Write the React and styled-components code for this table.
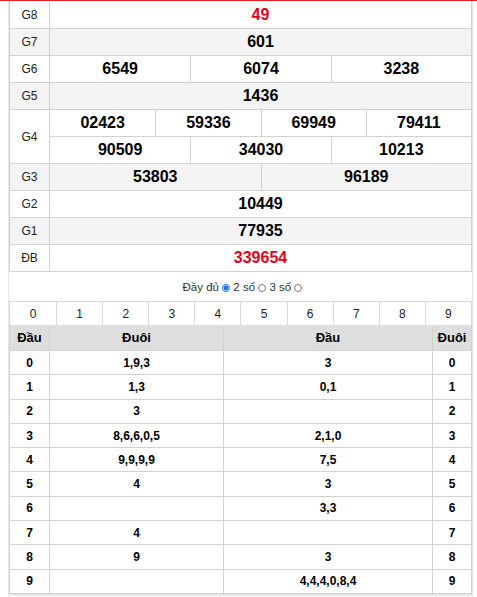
import React from "react";
import styled, { createGlobalStyle } from "styled-components";

const Global = createGlobalStyle`
  html, body { margin: 0; padding: 0; background: #fff; }
  body { font-family: Arial, "Liberation Sans", Helvetica, sans-serif; color: #000; }
  * { box-sizing: border-box; }
`;

const TopBar = styled.div`
  height: 1px;
  background: #ee1c25;
`;

const Container = styled.div`
  margin-left: 8px;
  width: 465px;
  border-left: 1px solid #e6e6e6;
  border-right: 1px solid #e6e6e6;
  border-bottom: 2px solid #e6e6e6;
`;

const PrizeTable = styled.div`
  padding-top: 1px;
  border-left: 1px solid #d2d2d2;
  border-right: 1px solid #d2d2d2;
`;

const PrizeRow = styled.div`
  display: grid;
  grid-template-columns: 40px 1fr;
  background: ${(p) => (p.$alt ? "#f4f4f4" : "#fff")};
  border-bottom: 1px solid #d2d2d2;
`;

const Label = styled.div`
  display: flex;
  align-items: center;
  justify-content: center;
  border-right: 1px solid #d2d2d2;
  font-size: 12px;
  color: #222;
`;

const ValueStack = styled.div`
  display: flex;
  flex-direction: column;
`;

const ValueLine = styled.div`
  display: grid;
  grid-template-columns: repeat(${(p) => p.$n}, 1fr);
  height: 26px;
  & + & {
    border-top: 1px solid #d2d2d2;
    height: 27px;
  }
`;

const Value = styled.div`
  display: flex;
  align-items: center;
  justify-content: center;
  font-size: 16px;
  font-weight: bold;
  color: ${(p) => (p.$red ? "#e3001b" : "#000")};
  & + & {
    border-left: 1px solid #d2d2d2;
  }
`;

const Options = styled.div`
  height: 29px;
  display: flex;
  align-items: center;
  justify-content: center;
  font-size: 11.5px;
  color: #333;
  padding: 1px 0 0 4px;
`;

const OptionText = styled.span`
  white-space: nowrap;
`;

const Radio = styled.input.attrs({ type: "radio", readOnly: true })`
  width: 8px;
  height: 8px;
  margin: 0;
  vertical-align: -1px;
  accent-color: #1a73e8;
`;

const DigitRow = styled.div`
  display: grid;
  grid-template-columns: repeat(10, 1fr);
  border-top: 1px solid #d9d9d9;
  border-left: 1px solid #d9d9d9;
  border-right: 1px solid #d9d9d9;
`;

const DigitCell = styled.div`
  height: 23px;
  display: flex;
  align-items: center;
  justify-content: center;
  font-size: 12px;
  color: #222;
  & + & {
    border-left: 1px solid #d9d9d9;
  }
`;

const LotoTable = styled.div`
  display: grid;
  grid-template-columns: 40px 174px 209px 39px;
  border-left: 1px solid #d2d2d2;
`;

const LotoCell = styled.div`
  height: ${(p) => (p.$head ? "26px" : "24.3px")};
  display: flex;
  align-items: center;
  justify-content: center;
  border-right: 1px solid #d2d2d2;
  border-bottom: 1px solid #d2d2d2;
  background: ${(p) => (p.$head ? "#dedede" : "#fff")};
  font-size: ${(p) => (p.$head ? "13px" : "12px")};
  font-weight: bold;
  color: #000;
`;

const prizes = [
  { label: "G8", lines: [["49"]], red: true },
  { label: "G7", lines: [["601"]], alt: true },
  { label: "G6", lines: [["6549", "6074", "3238"]] },
  { label: "G5", lines: [["1436"]], alt: true },
  { label: "G4", lines: [["02423", "59336", "69949", "79411"], ["90509", "34030", "10213"]] },
  { label: "G3", lines: [["53803", "96189"]], alt: true },
  { label: "G2", lines: [["10449"]] },
  { label: "G1", lines: [["77935"]], alt: true },
  { label: "ĐB", lines: [["339654"]], red: true },
];

const loto = [
  ["0", "1,9,3", "3", "0"],
  ["1", "1,3", "0,1", "1"],
  ["2", "3", "", "2"],
  ["3", "8,6,6,0,5", "2,1,0", "3"],
  ["4", "9,9,9,9", "7,5", "4"],
  ["5", "4", "3", "5"],
  ["6", "", "3,3", "6"],
  ["7", "4", "", "7"],
  ["8", "9", "3", "8"],
  ["9", "", "4,4,4,0,8,4", "9"],
];

export default function App() {
  return (
    <>
      <Global />
      <TopBar />
      <Container>
        <PrizeTable>
          {prizes.map((p) => (
            <PrizeRow key={p.label} $alt={p.alt}>
              <Label>{p.label}</Label>
              <ValueStack>
                {p.lines.map((line, i) => (
                  <ValueLine key={i} $n={line.length}>
                    {line.map((v) => (
                      <Value key={v} $red={p.red}>
                        {v}
                      </Value>
                    ))}
                  </ValueLine>
                ))}
              </ValueStack>
            </PrizeRow>
          ))}
        </PrizeTable>
        <Options>
          <OptionText>
            Đầy đủ <Radio name="mode" defaultChecked /> 2 số <Radio name="mode" /> 3 số <Radio name="mode" />
          </OptionText>
        </Options>
        <DigitRow>
          {Array.from({ length: 10 }, (_, i) => (
            <DigitCell key={i}>{i}</DigitCell>
          ))}
        </DigitRow>
        <LotoTable>
          <LotoCell $head>Đầu</LotoCell>
          <LotoCell $head>Đuôi</LotoCell>
          <LotoCell $head>Đầu</LotoCell>
          <LotoCell $head>Đuôi</LotoCell>
          {loto.map((r) =>
            r.map((c, j) => <LotoCell key={r[0] + "-" + j}>{c}</LotoCell>)
          )}
        </LotoTable>
      </Container>
    </>
  );
}
